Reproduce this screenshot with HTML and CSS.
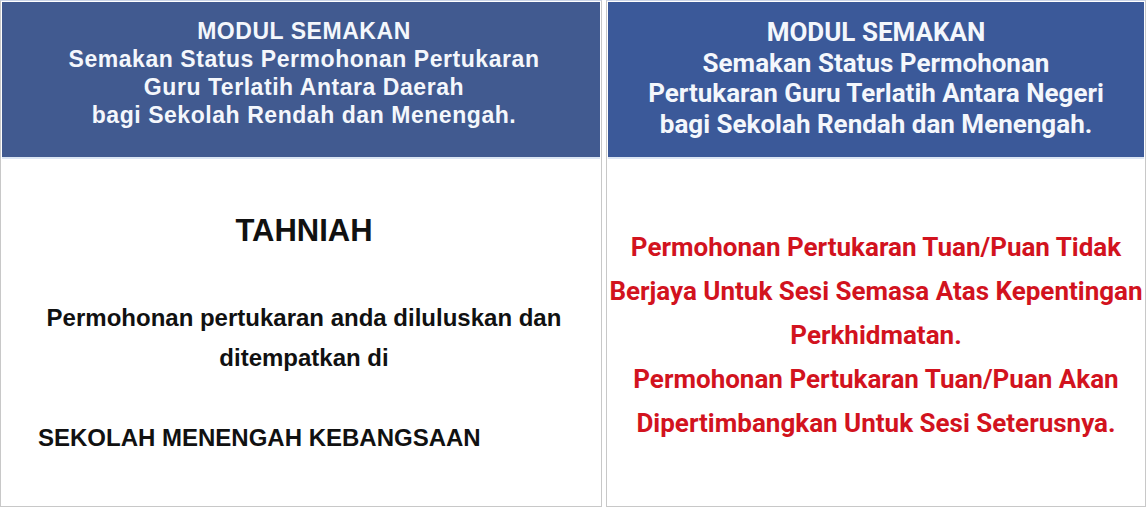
FILE: index.html
```html
<!DOCTYPE html>
<html lang="ms">
    <head>
        <meta charset="UTF-8">
        <meta name="viewport" content="width=device-width, initial-scale=1.0">
        <title>Modul Semakan</title>
        <link rel="stylesheet" href="styles.css">
    </head>
    <body>
        <div class="board">
            <div class="panel panel-daerah">
                <div class="panel-head">
                    MODUL SEMAKAN<br>
                    Semakan Status Permohonan Pertukaran<br>
                    Guru Terlatih Antara Daerah<br>
                    bagi Sekolah Rendah dan Menengah.
                </div>
                <div class="panel-body">
                    <h1 class="congrats">TAHNIAH</h1>
                    <p class="approved">Permohonan pertukaran anda diluluskan dan<br>ditempatkan di</p>
                    <p class="school">SEKOLAH MENENGAH KEBANGSAAN</p>
                </div>
            </div>

            <div class="panel panel-negeri">
                <div class="panel-head">
                    MODUL SEMAKAN<br>
                    Semakan Status Permohonan<br>
                    Pertukaran Guru Terlatih Antara Negeri<br>
                    bagi Sekolah Rendah dan Menengah.
                </div>
                <div class="panel-body">
                    <p class="rejected">
                        Permohonan Pertukaran Tuan/Puan Tidak<br>
                        Berjaya Untuk Sesi Semasa Atas Kepentingan<br>
                        Perkhidmatan.<br>
                        Permohonan Pertukaran Tuan/Puan Akan<br>
                        Dipertimbangkan Untuk Sesi Seterusnya.
                    </p>
                </div>
            </div>
        </div>
    </body>
</html>
```

FILE: styles.css
```css
body {
    margin: 0;
    background-color: #ffffff;
}

.board {
    display: flex;
    gap: 4px;
    height: 507px;
}

.panel {
    box-sizing: border-box;
    height: 507px;
    padding: 1px;
    border: 1px solid #c8c8c8;
    border-top-color: #c9d3e6;
    background-color: #ffffff;
}

.panel-daerah {
    width: 602px;
}

.panel-negeri {
    flex: 1;
}

.panel-head {
    height: 157px;
    box-sizing: border-box;
    color: #f4f7fc;
    font-weight: bold;
    text-align: center;
    border-bottom: 2px solid #dce6f4;
}

.panel-daerah .panel-head {
    padding: 15px 0 0 6px;
    background-color: #415a90;
    font-family: "Liberation Sans", Arial, sans-serif;
    font-size: 23px;
    line-height: 28px;
    letter-spacing: 0.55px;
}

.panel-negeri .panel-head {
    padding-top: 15px;
    background-color: #3b5999;
    font-family: Roboto, sans-serif;
    font-size: 26px;
    line-height: 30.5px;
}

.panel-daerah .panel-body {
    padding-left: 6px;
    font-family: "Liberation Sans", Arial, sans-serif;
    font-weight: bold;
    color: #111111;
}

.congrats {
    margin: 54px 0 0;
    font-size: 31px;
    line-height: 36px;
    text-align: center;
}

.approved {
    margin: 49px 0 0;
    font-size: 24px;
    line-height: 40px;
    text-align: center;
}

.school {
    margin: 40px 0 0 30px;
    font-size: 24px;
    line-height: 40px;
}

.rejected {
    margin: 66px 0 0;
    font-family: Roboto, sans-serif;
    font-weight: bold;
    font-size: 26px;
    line-height: 44px;
    color: #d2131e;
    text-align: center;
    white-space: nowrap;
}
```
